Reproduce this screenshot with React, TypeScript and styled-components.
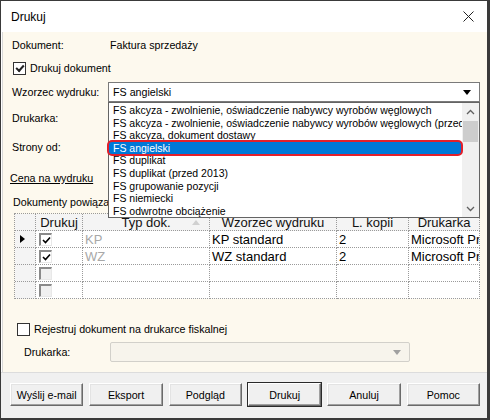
import React from "react";
import styled, { createGlobalStyle } from "styled-components";

const GlobalStyle = createGlobalStyle`
  html, body {
    margin: 0;
    padding: 0;
    background: #2b2b2b;
  }
  body {
    font-family: "Liberation Sans", Arial, sans-serif;
    font-size: 10.7px;
    color: #000;
  }
  * {
    box-sizing: border-box;
  }
`;

const listItems = [
  "FS akcyza - zwolnienie, oświadczenie nabywcy wyrobów węglowych",
  "FS akcyza - zwolnienie, oświadczenie nabywcy wyrobów węglowych (przed 2013)",
  "FS akcyza, dokument dostawy",
  "FS angielski",
  "FS duplikat",
  "FS duplikat (przed 2013)",
  "FS grupowanie pozycji",
  "FS niemiecki",
  "FS odwrotne obciążenie",
];

const gridRows = [
  { current: true, print: true, type: "KP", template: "KP standard", copies: "2", printer: "Microsoft Print to PDF" },
  { current: false, print: true, type: "WZ", template: "WZ standard", copies: "2", printer: "Microsoft Print to PDF" },
  { current: false, print: false, type: "", template: "", copies: "", printer: "" },
  { current: false, print: false, type: "", template: "", copies: "", printer: "" },
];

const columns = "21px 47px 127px 127px 72px 71px";

export default function App() {
  return (
    <>
      <GlobalStyle />
      <Window>
        <TitleBar>
          <Title>Drukuj</Title>
          <CloseButton>
            <svg width="11" height="11" viewBox="0 0 11 11">
              <path d="M0.5 0.5 L10.5 10.5 M10.5 0.5 L0.5 10.5" stroke="#222" strokeWidth="1" />
            </svg>
          </CloseButton>
        </TitleBar>

        <Body>
          <FieldRow $top={5}>
            <Label $width={98}>Dokument:</Label>
            <span>Faktura sprzedaży</span>
          </FieldRow>

          <FieldRow $top={7} $left={1}>
            <CheckBox>
              <CheckMark />
            </CheckBox>
            <CheckText>Drukuj dokument</CheckText>
          </FieldRow>

          <FieldRow $top={6} $height={20}>
            <Label $width={96}>Wzorzec wydruku:</Label>
            <ComboWrap>
              <Combo $width={372}>
                <span>FS angielski</span>
                <ComboArrow />
              </Combo>
              <DropList>
                <Items>
                  {listItems.map((t) => (
                    <Item key={t} $selected={t === "FS angielski"}>
                      {t}
                      {t === "FS angielski" && <Highlight />}
                    </Item>
                  ))}
                </Items>
                <ScrollBar>
                  <ScrollBtn>
                    <svg width="9" height="6" viewBox="0 0 9 6">
                      <path d="M1 5 L4.5 1.5 L8 5" stroke="#606060" strokeWidth="1.3" fill="none" />
                    </svg>
                  </ScrollBtn>
                  <ScrollTrack>
                    <Thumb />
                  </ScrollTrack>
                  <ScrollBtn>
                    <svg width="9" height="6" viewBox="0 0 9 6">
                      <path d="M1 1 L4.5 4.5 L8 1" stroke="#606060" strokeWidth="1.3" fill="none" />
                    </svg>
                  </ScrollBtn>
                </ScrollBar>
              </DropList>
            </ComboWrap>
          </FieldRow>

          <FieldRow $top={8}>
            <Label $width={96}>Drukarka:</Label>
          </FieldRow>

          <FieldRow $top={13}>
            <Label $width={96}>Strony od:</Label>
          </FieldRow>

          <FieldRow $top={15} $left={-2}>
            <LinkLabel>Cena na wydruku</LinkLabel>
          </FieldRow>

          <FieldRow $top={8} $left={1}>
            <Label $width={200}>Dokumenty powiązane</Label>
          </FieldRow>

          <Grid>
            <GridRow>
              <HeadCell />
              <HeadCell>Drukuj</HeadCell>
              <HeadCell>
                Typ dok.
                <SortArrow />
              </HeadCell>
              <HeadCell>Wzorzec wydruku</HeadCell>
              <HeadCell>L. kopii</HeadCell>
              <HeadCell>Drukarka</HeadCell>
            </GridRow>
            {gridRows.map((r, i) => (
              <GridRow key={i}>
                <SelectorCell>{r.current && <RowPointer />}</SelectorCell>
                <Cell>
                  <FlatCheck $checked={r.print}>
                    {r.print && (
                      <svg width="9" height="8" viewBox="0 0 9 8">
                        <path d="M1 4 L3.5 6.5 L8 1.5" stroke="#000" strokeWidth="1.6" fill="none" />
                      </svg>
                    )}
                  </FlatCheck>
                </Cell>
                <Cell $muted>{r.type}</Cell>
                <Cell>{r.template}</Cell>
                <Cell>{r.copies}</Cell>
                <Cell>{r.printer}</Cell>
              </GridRow>
            ))}
          </Grid>

          <FieldRow $top={22} $left={5}>
            <CheckBox />
            <CheckText>Rejestruj dokument na drukarce fiskalnej</CheckText>
          </FieldRow>

          <FieldRow $top={5} $height={20} $left={12}>
            <Label $width={86}>Drukarka:</Label>
            <Combo $width={300} $disabled>
              <ComboArrow $disabled />
            </Combo>
          </FieldRow>
        </Body>

        <Footer>
          <Button>Wyślij e-mail</Button>
          <Button>Eksport</Button>
          <Button>Podgląd</Button>
          <Button $default>Drukuj</Button>
          <Button>Anuluj</Button>
          <Button>Pomoc</Button>
        </Footer>
      </Window>
    </>
  );
}

const Window = styled.div`
  width: 490px;
  height: 420px;
  display: flex;
  flex-direction: column;
  background: #fff;
  border: 1px solid #3a3a3a;
  border-right-width: 3px;
  border-bottom-width: 2px;
  overflow: hidden;
`;

const TitleBar = styled.div`
  height: 31px;
  flex: none;
  display: flex;
  align-items: center;
  justify-content: space-between;
  padding: 0 10px;
  background: #fff;
`;

const Title = styled.span`
  font-size: 12px;
  color: #000;
`;

const CloseButton = styled.div`
  width: 20px;
  display: flex;
  justify-content: center;
  margin-right: -1px;
`;

const Body = styled.div`
  flex: 1;
  display: flex;
  flex-direction: column;
  padding: 0 8px 0 9px;
  background: #fdf9ee;
  border-left: 1px solid #d8d8d8;
  margin-left: 1px;
`;

const FieldRow = styled.div<{ $top?: number; $height?: number; $left?: number }>`
  display: flex;
  align-items: center;
  height: ${(p) => p.$height ?? 16}px;
  margin-top: ${(p) => p.$top ?? 0}px;
  margin-left: ${(p) => p.$left ?? 0}px;
  flex: none;
`;

const Label = styled.span<{ $width: number }>`
  width: ${(p) => p.$width}px;
  flex: none;
  white-space: nowrap;
`;

const LinkLabel = styled.span`
  text-decoration: underline;
`;

const CheckBox = styled.div`
  width: 13px;
  height: 13px;
  border: 1px solid #333;
  background: #fff;
  display: flex;
  align-items: center;
  justify-content: center;
  flex: none;
`;

const CheckMark = styled.div`
  width: 8px;
  height: 5px;
  border-left: 2px solid #222;
  border-bottom: 2px solid #222;
  transform: translateY(-1px) rotate(-48deg);
`;

const CheckText = styled.span`
  margin-left: 4px;
`;

const ComboWrap = styled.div`
  position: relative;
`;

const Combo = styled.div<{ $width: number; $disabled?: boolean }>`
  width: ${(p) => p.$width}px;
  height: 20px;
  display: flex;
  align-items: center;
  justify-content: space-between;
  padding: 0 8px 0 4px;
  background: ${(p) => (p.$disabled ? "#f7f4ec" : "#fff")};
  border: 1px solid ${(p) => (p.$disabled ? "#d2d0ca" : "#7a7a7a")};
  border-radius: ${(p) => (p.$disabled ? "2px" : "0")};
`;

const ComboArrow = styled.div<{ $disabled?: boolean }>`
  margin-left: auto;
  width: 0;
  height: 0;
  border-left: 4.5px solid transparent;
  border-right: 4.5px solid transparent;
  border-top: 5px solid ${(p) => (p.$disabled ? "#a0a0a0" : "#000")};
`;

const DropList = styled.div`
  position: absolute;
  top: 100%;
  left: 0;
  width: 372px;
  height: 116px;
  background: #fff;
  border: 1px solid #646464;
  display: flex;
  z-index: 10;
  font-size: 10.5px;
`;

const Items = styled.div`
  flex: 1;
  min-width: 0;
  padding-top: 1px;
`;

const Item = styled.div<{ $selected?: boolean }>`
  position: relative;
  height: 12.6px;
  line-height: 12.6px;
  padding-left: 4px;
  white-space: nowrap;
  background: ${(p) => (p.$selected ? "#0078d7" : "transparent")};
  color: ${(p) => (p.$selected ? "#fff" : "#000")};
  clip-path: ${(p) => (p.$selected ? "none" : "inset(0 0 0 0)")};
`;

const Highlight = styled.div`
  position: absolute;
  left: -2px;
  right: -1px;
  top: -2px;
  bottom: -2px;
  border: 2px solid #e3202b;
  border-radius: 5px;
`;

const ScrollBar = styled.div`
  width: 17px;
  flex: none;
  background: #f0f0f0;
  display: flex;
  flex-direction: column;
`;

const ScrollBtn = styled.div`
  height: 17px;
  display: flex;
  align-items: center;
  justify-content: center;
`;

const ScrollTrack = styled.div`
  flex: 1;
  padding: 1px 1px 0 1px;
`;

const Thumb = styled.div`
  height: 21px;
  background: #cdcdcd;
`;

const Grid = styled.div`
  margin-top: 3px;
  margin-left: 2px;
  width: 466px;
  display: flex;
  flex-direction: column;
  border-left: 1px dotted #9a9a9a;
  border-top: 1px dotted #9a9a9a;
  flex: none;
  font-size: 13px;
`;

const GridRow = styled.div`
  display: grid;
  grid-template-columns: ${columns};
  height: 17px;
`;

const HeadCell = styled.div`
  position: relative;
  display: flex;
  align-items: center;
  justify-content: center;
  background: #f4f4f4;
  border-right: 1px dotted #9a9a9a;
  border-bottom: 1px dotted #9a9a9a;
  color: #111;
  white-space: nowrap;
  overflow: hidden;
  line-height: 15px;
`;

const SortArrow = styled.div`
  position: absolute;
  right: 9px;
  top: 6px;
  width: 0;
  height: 0;
  border-left: 4px solid transparent;
  border-right: 4px solid transparent;
  border-bottom: 5px solid #d0d0d0;
`;

const SelectorCell = styled.div`
  display: flex;
  align-items: center;
  padding-left: 5px;
  background: #f4f4f4;
  border-right: 1px dotted #9a9a9a;
  border-bottom: 1px dotted #9a9a9a;
`;

const RowPointer = styled.div`
  width: 0;
  height: 0;
  border-top: 4.5px solid transparent;
  border-bottom: 4.5px solid transparent;
  border-left: 5px solid #000;
`;

const Cell = styled.div<{ $muted?: boolean }>`
  display: flex;
  align-items: center;
  padding-left: 2px;
  background: #fff;
  color: ${(p) => (p.$muted ? "#a8a8a8" : "#000")};
  border-right: 1px dotted #9a9a9a;
  border-bottom: 1px dotted #9a9a9a;
  white-space: nowrap;
  overflow: hidden;
`;

const FlatCheck = styled.div<{ $checked?: boolean }>`
  width: 13px;
  height: 13px;
  margin-left: 1px;
  display: flex;
  align-items: center;
  justify-content: center;
  background: ${(p) => (p.$checked ? "#fff" : "#f0f0f0")};
  border-top: 2px solid #8a8a8a;
  border-left: 2px solid #8a8a8a;
  border-right: 1px solid #e8e8e8;
  border-bottom: 1px solid #e8e8e8;
`;

const Footer = styled.div`
  height: 46px;
  flex: none;
  display: grid;
  grid-template-columns: repeat(6, 1fr);
  column-gap: 6px;
  padding: 10px 7px 0 9px;
  background: #f0f0f0;
  border-top: 1px solid #dcdcdc;
`;

const Button = styled.div<{ $default?: boolean }>`
  height: 23px;
  display: flex;
  align-items: center;
  justify-content: center;
  background: #f0f0f0;
  color: #000;
  border-top: 1px solid #fff;
  border-left: 1px solid #fff;
  border-right: 1px solid #6a6a6a;
  border-bottom: 1px solid #6a6a6a;
  box-shadow: ${(p) =>
    p.$default
      ? "0 0 0 1px #2a2a2a, inset -1px -1px 0 #a0a0a0"
      : "inset -1px -1px 0 #a0a0a0, inset 1px 1px 0 #e3e3e3"};
`;
